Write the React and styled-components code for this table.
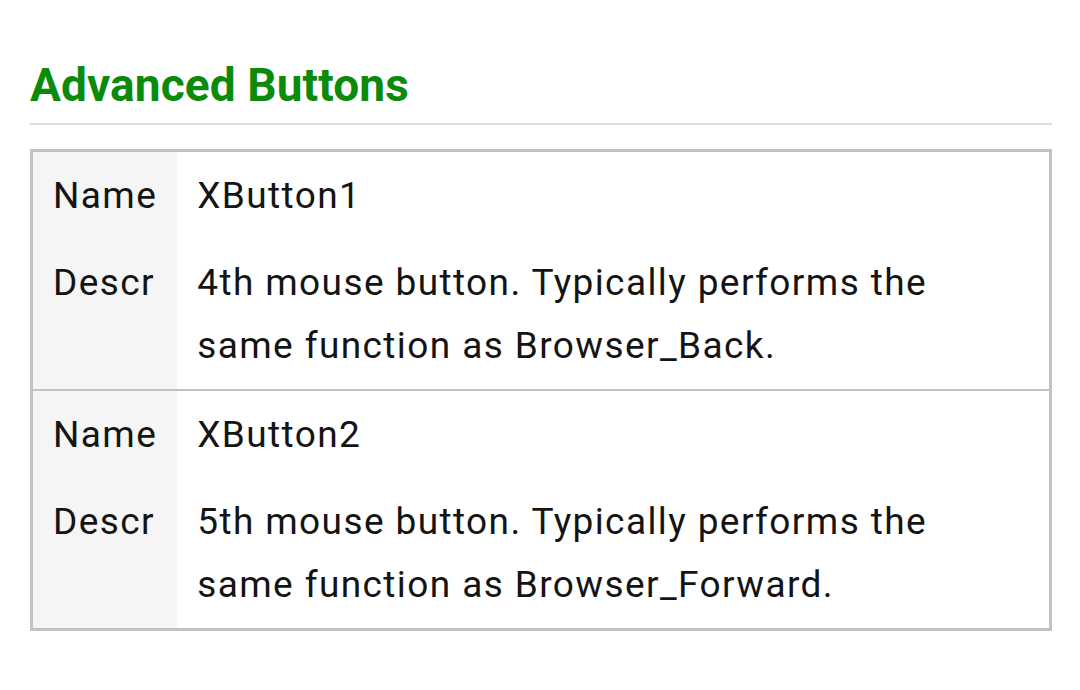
import styled, { createGlobalStyle } from 'styled-components';

const GlobalStyle = createGlobalStyle`
    body {
        margin: 0;
        background: #ffffff;
        font-family: Roboto, "Liberation Sans", sans-serif;
    }
`;

const buttons = [
    { name: 'XButton1', descr: '4th mouse button. Typically performs the same function as Browser_Back.' },
    { name: 'XButton2', descr: '5th mouse button. Typically performs the same function as Browser_Forward.' },
];

const App = () => {
    return (
        <Page>
            <GlobalStyle />
            <Heading>Advanced Buttons</Heading>
            <Table>
                {buttons.map(btn => (
                    <Group key={btn.name}>
                        <tr>
                            <Key>Name</Key>
                            <Value>{btn.name}</Value>
                        </tr>
                        <tr>
                            <Key>Descr</Key>
                            <Value><Text>{btn.descr}</Text></Value>
                        </tr>
                    </Group>
                ))}
            </Table>
        </Page>
    );
};

export default App;

const Page = styled.div`
    padding: 58px 28px 40px 30px;
`;

const Heading = styled.h2`
    margin: 0 0 24px;
    padding-bottom: 11px;
    border-bottom: 2px solid #dddddd;
    color: #0b8a0b;
    font-size: 46px;
    font-weight: 700;
    letter-spacing: 0.1px;
    line-height: 54px;
`;

const Table = styled.table`
    width: 100%;
    border-collapse: collapse;
    border: 3px solid #c2c2c2;
    color: #141414;
    font-size: 37px;
    letter-spacing: 1.4px;
    line-height: 63px;
`;

const Group = styled.tbody`
    border-bottom: 2px solid #c2c2c2;
`;

const Key = styled.td`
    width: 104px;
    padding: 12px 20px;
    background: #f5f5f5;
    vertical-align: top;
`;

const Value = styled.td`
    padding: 12px 20px;
    vertical-align: top;
`;

const Text = styled.div`
    max-width: 780px;
`;
